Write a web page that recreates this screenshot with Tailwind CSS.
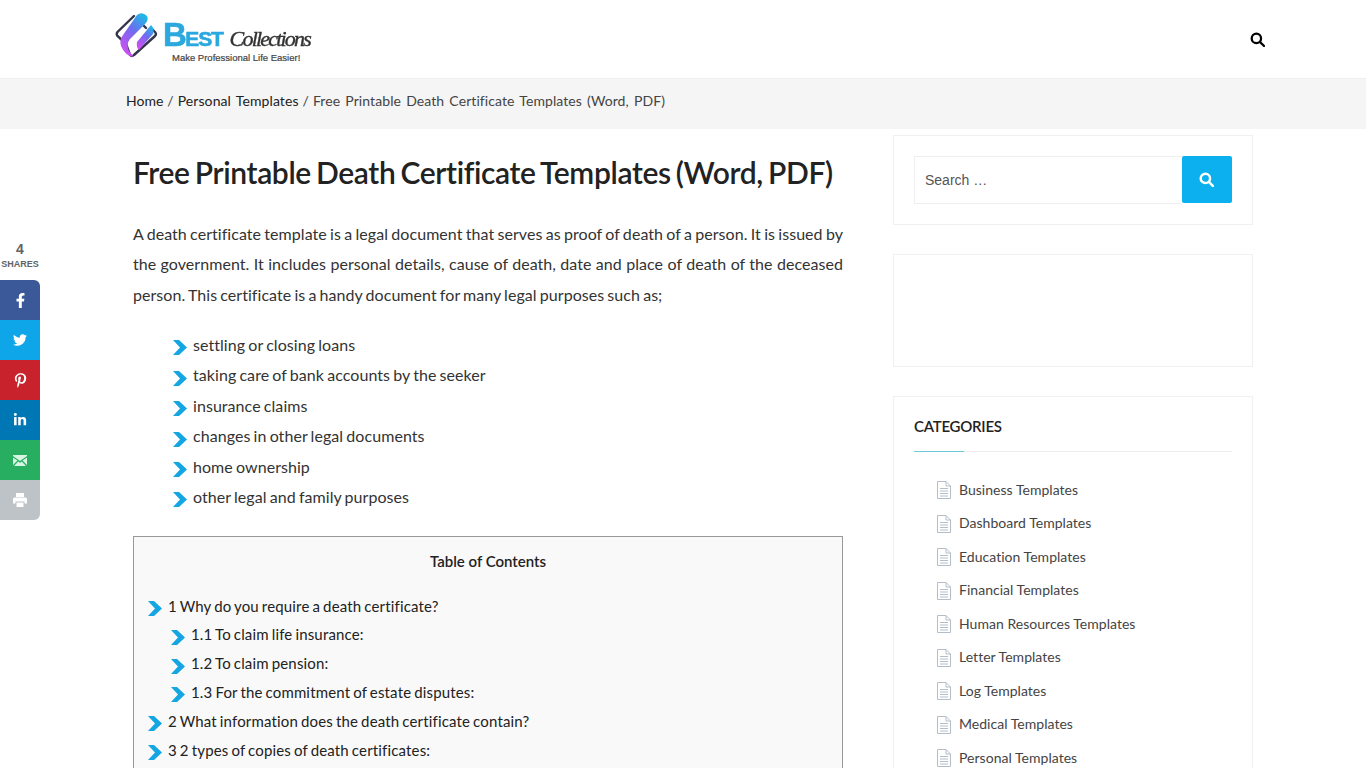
<!DOCTYPE html>
<html lang="en">
<head>
    <meta charset="UTF-8">
    <meta name="viewport" content="width=device-width, initial-scale=1.0">
    <title>Free Printable Death Certificate Templates</title>
    <script src="https://cdn.jsdelivr.net/npm/@tailwindcss/browser@4"></script>
</head>
<body class="bg-white font-['Lato',sans-serif] text-[#333]">
<div class="relative h-[768px] overflow-hidden">

    <!-- header -->
    <header class="h-[79px] border-b border-[#efefef] flex items-start justify-between pl-[115px] pr-[101px]">
        <div class="flex items-start gap-[3px] pt-[10px]">
            <svg width="45" height="50" viewBox="0 0 45 50" fill="none" class="blur-[0.4px]">
                <defs>
                    <linearGradient id="swoosh" x1="0.7" y1="0" x2="0.2" y2="1">
                        <stop offset="0" stop-color="#22b5e6"/>
                        <stop offset="0.4" stop-color="#6f6cf0"/>
                        <stop offset="1" stop-color="#d94cf0"/>
                    </linearGradient>
                </defs>
                <path d="M19 6 L2.500 22 Q1 24 2.500 26 L10 33 M26 13 L31 18" stroke="#33344a" stroke-width="2.400" stroke-linecap="round"/>
                <path d="M10 31 L15 45 Q17 47 19 45 L40 26 Q42 24 40 22 L36 18" stroke="#33344a" stroke-width="2.400" stroke-linecap="round" stroke-linejoin="round"/>
                <path d="M22 5 Q27 1 32 6 Q34 10 30 14 L15 29 Q11 34 14 41 L19 47 Q10 46 6 36 Q4 30 8 25 Z" fill="url(#swoosh)"/>
                <path d="M36 15 Q40 19 38 24 L24 40 Q21 37 22 32 Z" fill="url(#swoosh)"/>
            </svg>
            <div class="flex flex-col">
                <div class="flex items-baseline h-[36px] pt-[8px] leading-none">
                    <span class="font-['Liberation_Sans',sans-serif] font-bold text-[#2ba8de] text-[33px] tracking-[-1.500px] [-webkit-text-stroke:0.6px_#2ba8de] blur-[0.5px]">B</span>
                    <span class="font-['Liberation_Sans',sans-serif] font-bold text-[#2ba8de] text-[21px] tracking-[-1.200px] mr-[7px] [-webkit-text-stroke:0.6px_#2ba8de] blur-[0.5px]">EST</span>
                    <span class="font-['Liberation_Serif',serif] italic text-[#333] text-[22px] tracking-[-1.800px] [-webkit-text-stroke:0.4px_#333] blur-[0.3px]">Collections</span>
                </div>
                <div class="font-['Liberation_Sans',sans-serif] text-[9.500px] text-[#444] mt-[7px] ml-[9px] leading-none [-webkit-text-stroke:0.2px_#444] whitespace-nowrap">Make Professional Life Easier!</div>
            </div>
        </div>
        <svg class="w-[15px] h-[15px] mt-[32px]" viewBox="0 0 16 16" fill="none" stroke="#000" stroke-width="2.4"><circle cx="6.8" cy="6.8" r="5"/><path d="M10.5 10.5 L15 15" stroke-linecap="round"/></svg>
    </header>

    <!-- breadcrumb -->
    <nav class="h-[50px] bg-[#f5f5f5] flex items-center pl-[126px] pb-[8px] text-[14px] text-[#444] [word-spacing:1.5px]">
        <a class="text-[#222]">Home</a><span class="mx-[4px]">/</span>
        <a class="text-[#222] tracking-[0.1px]">Personal Templates</a><span class="mx-[4px]">/</span>
        <span class="tracking-[0.08px]">Free Printable Death Certificate Templates (Word, PDF)</span>
    </nav>

    <div class="flex pl-[133px] gap-[50px]">
        <!-- article -->
        <main class="w-[710px] shrink-0">
            <h1 class="mt-[24px] text-[30px] leading-[38px] font-semibold text-[#222] tracking-[-0.36px] [word-spacing:-2px]">Free Printable Death Certificate Templates (Word, PDF)</h1>
            <p class="mt-[27.7px] text-[16px] leading-[30.5px] text-[#333] text-justify tracking-[0.05px] [word-spacing:-1px]">A death certificate template is a legal document that serves as proof of death of a person. It is issued by the government. It includes personal details, cause of death, date and place of death of the deceased person. This certificate is a handy document for many legal purposes such as;</p>

            <ul class="mt-[19.9px] pl-[40px] text-[16px] leading-[30.4px] text-[#333] tracking-[0.06px] [word-spacing:-1px]">
                <li class="flex items-center gap-[6px]"><svg class="w-[14px] h-[15px] mt-[5px] shrink-0" viewBox="0 0 14 15"><path d="M0 0 H6 L14 7.5 L6 15 H0 L7 7.5 Z" fill="#14a5e3"/></svg>settling or closing loans</li>
                <li class="flex items-center gap-[6px]"><svg class="w-[14px] h-[15px] mt-[5px] shrink-0" viewBox="0 0 14 15"><path d="M0 0 H6 L14 7.5 L6 15 H0 L7 7.5 Z" fill="#14a5e3"/></svg>taking care of bank accounts by the seeker</li>
                <li class="flex items-center gap-[6px]"><svg class="w-[14px] h-[15px] mt-[5px] shrink-0" viewBox="0 0 14 15"><path d="M0 0 H6 L14 7.5 L6 15 H0 L7 7.5 Z" fill="#14a5e3"/></svg>insurance claims</li>
                <li class="flex items-center gap-[6px]"><svg class="w-[14px] h-[15px] mt-[5px] shrink-0" viewBox="0 0 14 15"><path d="M0 0 H6 L14 7.5 L6 15 H0 L7 7.5 Z" fill="#14a5e3"/></svg>changes in other legal documents</li>
                <li class="flex items-center gap-[6px]"><svg class="w-[14px] h-[15px] mt-[5px] shrink-0" viewBox="0 0 14 15"><path d="M0 0 H6 L14 7.5 L6 15 H0 L7 7.5 Z" fill="#14a5e3"/></svg>home ownership</li>
                <li class="flex items-center gap-[6px]"><svg class="w-[14px] h-[15px] mt-[5px] shrink-0" viewBox="0 0 14 15"><path d="M0 0 H6 L14 7.5 L6 15 H0 L7 7.5 Z" fill="#14a5e3"/></svg>other legal and family purposes</li>
            </ul>

            <!-- table of contents -->
            <div class="mt-[23.4px] border border-[#999] bg-[#f9f9f9] pb-[20px] text-[15px] leading-[28.8px] text-[#222] tracking-[0.16px] [word-spacing:-1px]">
                <div class="text-center font-semibold mt-[10px] tracking-[0px] [word-spacing:0px]">Table of Contents</div>
                <ul class="mt-[15.85px] pl-[14px]">
                    <li class="flex items-center gap-[6px]"><svg class="w-[14px] h-[15px] mt-[5px] shrink-0" viewBox="0 0 14 15"><path d="M0 0 H6 L14 7.5 L6 15 H0 L7 7.5 Z" fill="#14a5e3"/></svg>1 Why do you require a death certificate?</li>
                    <li class="flex items-center gap-[6px] pl-[23px]"><svg class="w-[14px] h-[15px] mt-[5px] shrink-0" viewBox="0 0 14 15"><path d="M0 0 H6 L14 7.5 L6 15 H0 L7 7.5 Z" fill="#14a5e3"/></svg>1.1 To claim life insurance:</li>
                    <li class="flex items-center gap-[6px] pl-[23px]"><svg class="w-[14px] h-[15px] mt-[5px] shrink-0" viewBox="0 0 14 15"><path d="M0 0 H6 L14 7.5 L6 15 H0 L7 7.5 Z" fill="#14a5e3"/></svg>1.2 To claim pension:</li>
                    <li class="flex items-center gap-[6px] pl-[23px]"><svg class="w-[14px] h-[15px] mt-[5px] shrink-0" viewBox="0 0 14 15"><path d="M0 0 H6 L14 7.5 L6 15 H0 L7 7.5 Z" fill="#14a5e3"/></svg>1.3 For the commitment of estate disputes:</li>
                    <li class="flex items-center gap-[6px]"><svg class="w-[14px] h-[15px] mt-[5px] shrink-0" viewBox="0 0 14 15"><path d="M0 0 H6 L14 7.5 L6 15 H0 L7 7.5 Z" fill="#14a5e3"/></svg>2 What information does the death certificate contain?</li>
                    <li class="flex items-center gap-[6px]"><svg class="w-[14px] h-[15px] mt-[5px] shrink-0" viewBox="0 0 14 15"><path d="M0 0 H6 L14 7.5 L6 15 H0 L7 7.5 Z" fill="#14a5e3"/></svg>3 2 types of copies of death certificates:</li>
                </ul>
            </div>
        </main>

        <!-- sidebar -->
        <aside class="w-[360px] shrink-0 pt-[6px]">
            <div class="h-[90px] border border-[#f0f0f0] pl-[20px] pr-[20px] pt-[20px]">
                <div class="flex h-[48px]">
                    <div class="flex-1 border border-[#efefef] border-r-0 flex items-center pl-[10px] font-['Liberation_Sans',sans-serif] text-[14px] text-[#555]">Search …</div>
                    <div class="w-[50px] h-[47px] bg-[#0cb0ee] rounded-[2px] flex items-center justify-center pr-[2px]">
                        <svg class="w-[15px] h-[15px]" viewBox="0 0 16 16" fill="none" stroke="#fff" stroke-width="2.6"><circle cx="6.8" cy="6.8" r="5"/><path d="M10.5 10.5 L15 15" stroke-linecap="round"/></svg>
                    </div>
                </div>
            </div>
            <div class="mt-[29px] h-[113px] border border-[#f0f0f0]"></div>
            <div class="mt-[29px] border border-[#f0f0f0] pl-[20px] pr-[20px] pb-[30px]">
                <h3 class="mt-[18px] text-[15px] leading-[22px] font-semibold text-[#222] tracking-[-0.25px]">CATEGORIES</h3>
                <div class="mt-[14px] h-px bg-[#eee]"><div class="w-[50px] h-px bg-[#6ccbd6]"></div></div>
                <ul class="mt-[20.7px] pl-[23px] text-[14px] text-[#444] tracking-[0.03px]">
                    <li class="h-[33.5px] flex items-center gap-[8px]"><svg class="w-[14px] h-[18px] mt-[2px] shrink-0" viewBox="0 0 14 18" fill="none" stroke="#b3bec9"><path d="M.5.5 H9 L13.5 5 V17.5 H.5 Z M9 .5 V5 H13.5 M3 7.5 H11 M3 10 H11 M3 12.5 H11 M3 15 H11"/></svg>Business Templates</li>
                    <li class="h-[33.5px] flex items-center gap-[8px]"><svg class="w-[14px] h-[18px] mt-[2px] shrink-0" viewBox="0 0 14 18" fill="none" stroke="#b3bec9"><path d="M.5.5 H9 L13.5 5 V17.5 H.5 Z M9 .5 V5 H13.5 M3 7.5 H11 M3 10 H11 M3 12.5 H11 M3 15 H11"/></svg>Dashboard Templates</li>
                    <li class="h-[33.5px] flex items-center gap-[8px]"><svg class="w-[14px] h-[18px] mt-[2px] shrink-0" viewBox="0 0 14 18" fill="none" stroke="#b3bec9"><path d="M.5.5 H9 L13.5 5 V17.5 H.5 Z M9 .5 V5 H13.5 M3 7.5 H11 M3 10 H11 M3 12.5 H11 M3 15 H11"/></svg>Education Templates</li>
                    <li class="h-[33.5px] flex items-center gap-[8px]"><svg class="w-[14px] h-[18px] mt-[2px] shrink-0" viewBox="0 0 14 18" fill="none" stroke="#b3bec9"><path d="M.5.5 H9 L13.5 5 V17.5 H.5 Z M9 .5 V5 H13.5 M3 7.5 H11 M3 10 H11 M3 12.5 H11 M3 15 H11"/></svg>Financial Templates</li>
                    <li class="h-[33.5px] flex items-center gap-[8px]"><svg class="w-[14px] h-[18px] mt-[2px] shrink-0" viewBox="0 0 14 18" fill="none" stroke="#b3bec9"><path d="M.5.5 H9 L13.5 5 V17.5 H.5 Z M9 .5 V5 H13.5 M3 7.5 H11 M3 10 H11 M3 12.5 H11 M3 15 H11"/></svg>Human Resources Templates</li>
                    <li class="h-[33.5px] flex items-center gap-[8px]"><svg class="w-[14px] h-[18px] mt-[2px] shrink-0" viewBox="0 0 14 18" fill="none" stroke="#b3bec9"><path d="M.5.5 H9 L13.5 5 V17.5 H.5 Z M9 .5 V5 H13.5 M3 7.5 H11 M3 10 H11 M3 12.5 H11 M3 15 H11"/></svg>Letter Templates</li>
                    <li class="h-[33.5px] flex items-center gap-[8px]"><svg class="w-[14px] h-[18px] mt-[2px] shrink-0" viewBox="0 0 14 18" fill="none" stroke="#b3bec9"><path d="M.5.5 H9 L13.5 5 V17.5 H.5 Z M9 .5 V5 H13.5 M3 7.5 H11 M3 10 H11 M3 12.5 H11 M3 15 H11"/></svg>Log Templates</li>
                    <li class="h-[33.5px] flex items-center gap-[8px]"><svg class="w-[14px] h-[18px] mt-[2px] shrink-0" viewBox="0 0 14 18" fill="none" stroke="#b3bec9"><path d="M.5.5 H9 L13.5 5 V17.5 H.5 Z M9 .5 V5 H13.5 M3 7.5 H11 M3 10 H11 M3 12.5 H11 M3 15 H11"/></svg>Medical Templates</li>
                    <li class="h-[33.5px] flex items-center gap-[8px]"><svg class="w-[14px] h-[18px] mt-[2px] shrink-0" viewBox="0 0 14 18" fill="none" stroke="#b3bec9"><path d="M.5.5 H9 L13.5 5 V17.5 H.5 Z M9 .5 V5 H13.5 M3 7.5 H11 M3 10 H11 M3 12.5 H11 M3 15 H11"/></svg>Personal Templates</li>
                </ul>
            </div>
        </aside>
    </div>

    <!-- floating share bar -->
    <div class="absolute left-0 top-[241px] w-[40px] font-['Liberation_Sans',sans-serif]">
        <div class="text-center text-[14px] leading-[17px] font-bold text-[#606468]">4</div>
        <div class="text-center text-[9px] leading-[11px] font-bold text-[#606468] mt-[1px]">SHARES</div>
        <div class="mt-[10px] rounded-r-[6px] overflow-hidden">
            <div class="h-[40px] bg-[#3b5998] flex items-center justify-center">
                <svg class="w-[15px] h-[15px]" viewBox="0 0 320 512" fill="#fff"><path d="M279 288l14-93h-89v-60c0-25 12-50 52-50h41V6S260 0 225 0c-73 0-121 44-121 125v70H23v93h81v224h100V288z"/></svg>
            </div>
            <div class="h-[40px] bg-[#0ea5e9] flex items-center justify-center">
                <svg class="w-[14px] h-[14px]" viewBox="0 0 512 512" fill="#fff"><path d="M459 152c.3 4.500.3 9 .3 13.600 0 139-106 299-299 299-60 0-115-17-161-47 8 1 16 1 25 1 49 0 94-17 130-45-46-1-85-31-98-73 6 1 13 2 20 2 9 0 19-1 28-4-48-10-84-52-84-103v-1c14 8 30 13 47 13-28-19-47-51-47-87 0-19 5-37 14-53 52 64 129 105 216 110-2-8-3-16-3-24 0-58 47-105 105-105 30 0 57 13 77 33 24-5 46-14 67-26-8 24-25 45-46 58 21-2 41-8 60-16-14 21-32 39-52 54z"/></svg>
            </div>
            <div class="h-[40px] bg-[#c8232c] flex items-center justify-center">
                <svg class="w-[15px] h-[15px]" viewBox="0 0 384 512" fill="#fff"><path d="M204 7C101 7 0 75 0 186c0 70 40 110 64 110 10 0 16-27 16-35 0-9-24-29-24-68 0-81 62-138 141-138 68 0 119 39 119 110 0 53-21 153-90 153-25 0-46-18-46-44 0-38 27-75 27-114 0-66-94-54-94 26 0 17 2 35 10 50-14 60-42 149-42 211 0 19 3 38 5 57 3 4 2 3 7 1 50-69 48-82 71-172 12 24 44 36 69 36 106 0 154-103 154-197C387 73 301 7 204 7z"/></svg>
            </div>
            <div class="h-[40px] bg-[#0077b5] flex items-center justify-center">
                <svg class="w-[14px] h-[14px]" viewBox="0 0 448 512" fill="#fff"><path d="M100 448H7V149h93zM54 108C24 108 0 83 0 54a54 54 0 01108 0c0 29-24 54-54 54zm394 340h-93V302c0-35-1-79-48-79-49 0-56 38-56 77v148h-93V149h89v41h1c12-24 43-48 88-48 94 0 112 62 112 142v164z"/></svg>
            </div>
            <div class="h-[40px] bg-[#27ae60] flex items-center justify-center">
                <svg class="w-[14px] h-[11px]" viewBox="0 0 14 11" fill="#d6f5e3"><path d="M0 1 L7 6 L14 1 V0 H0 Z M0 2.500 V10 L4.500 5.500 Z M14 2.500 V10 L9.500 5.500 Z M1 11 H13 L8.800 6.400 L7 7.700 L5.200 6.400 Z"/></svg>
            </div>
            <div class="h-[40px] bg-[#bdc3c7] flex items-center justify-center">
                <svg class="w-[14px] h-[14px]" viewBox="0 0 14 14" fill="#fff"><path d="M3 0 H11 V4 H3 Z M1.500 4.500 H12.500 A1.500 1.500 0 0 1 14 6 V10.500 H11.500 V8.500 H2.500 V10.500 H0 V6 A1.500 1.500 0 0 1 1.500 4.500 Z M3.500 9.500 H10.500 V14 H3.500 Z"/></svg>
            </div>
        </div>
    </div>
</div>
</body>
</html>
